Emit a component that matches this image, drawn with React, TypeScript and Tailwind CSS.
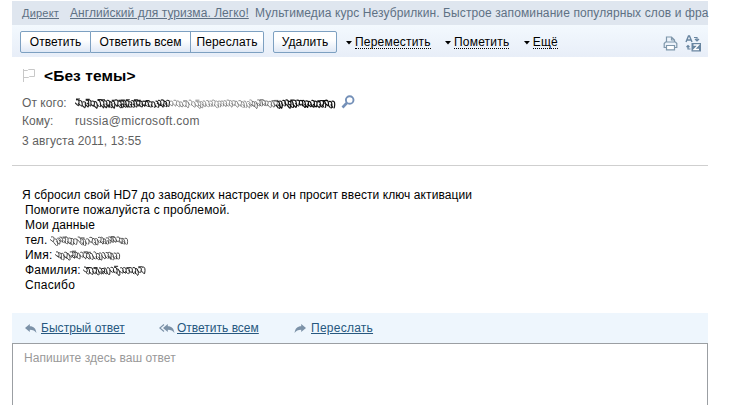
import type { ReactNode } from 'react';

type ScribbleProps = {
  width: number;
  seed: number;
  // parts drawn one after another: end of the part (0..1) and its colour
  parts: { end: number; color: string; weight: number }[];
};

// Hand scribble that hides private data
const Scribble = ({ width, seed, parts }: ScribbleProps) => {
  let s = seed;
  const rand = () => {
    s = (s * 16807) % 2147483647;
    return s / 2147483647;
  };

  let x = 1;
  const paths = parts.map((part) => {
    let d = '';
    while (x < width * part.end - 3) {
      // small slanted loops with short strokes between them
      const y = 2 + rand() * 2;
      const h = 4.5 + rand() * 2.5;
      d += `M${x.toFixed(1)} ${y.toFixed(1)}q${(2 + rand() * 2).toFixed(1)} -1 3 ${(h / 2).toFixed(1)}t-1 ${(h / 2).toFixed(1)}`;
      d += `M${(x - 1).toFixed(1)} ${(y + h / 2).toFixed(1)}l${(2 + rand() * 1.5).toFixed(1)} ${(h / 2).toFixed(1)}`;
      if (rand() > 0.8) d += `M${x.toFixed(1)} ${(y - 1).toFixed(1)}h4`;
      x += 2.3 + rand() * 1.4;
    }
    return { d, ...part };
  });

  return (
    <svg width={width} height={11} viewBox={`0 0 ${width} 11`} fill="none" className="shrink-0">
      {paths.map((p) => (
        <path key={p.end} d={p.d} stroke={p.color} strokeWidth={p.weight} />
      ))}
    </svg>
  );
};

const ReplyArrow = ({ className = '' }: { className?: string }) => (
  <svg width="12" height="10" viewBox="0 0 12 10" fill="#7c92a8" className={className}>
    <path d="M0 4 4.8 0v2.3C8.8 2.3 10.8 4.4 11.4 9 9.8 6.6 8 5.7 4.8 5.7V8z" />
  </svg>
);

const ReplyAllArrow = () => (
  <svg width="16" height="10" viewBox="0 0 16 10" fill="#7c92a8">
    <path d="M4 4 8.8 0v2.3c4 0 6 2.1 6.6 6.7C13.8 6.6 12 5.7 8.8 5.7V8z" />
    <path d="M5 .5.8 4 5 7.5" fill="none" stroke="#7c92a8" strokeWidth="1.2" />
  </svg>
);

const MenuLink = ({ className, children }: { className: string; children: ReactNode }) => (
  <a className={`flex items-center ${className}`}>
    <svg width="6" height="4" viewBox="0 0 6 4" className="mt-[3px] mr-[3px]">
      <path d="M0 0h6L3 3.5z" fill="#000" />
    </svg>
    <span className="h-[14px] border-b border-dotted border-black leading-[14px] tracking-[0.2px]">{children}</span>
  </a>
);

const buttonClass =
  'flex h-[22px] items-center justify-center border-[#7da0c1] bg-linear-to-b from-white from-40% to-[#dfe8f5]';

export default function App() {
  return (
    <div className="h-[405px] w-[732px] overflow-hidden bg-white pt-px pl-3 font-['Liberation_Sans',Arial,sans-serif] text-[12px] leading-[15px] text-black">
      <div className="flex h-[404px] w-[696px] flex-col">
        {/* Ad line */}
        <div className="flex h-6 shrink-0 items-center bg-[#dfe6ef] pt-px pl-[10px] whitespace-nowrap text-[#5e7184]">
          <a className="w-12 shrink-0 text-[11px] tracking-[0.2px] underline">Директ</a>
          <a className="w-[185px] shrink-0 tracking-[0.05px] underline">Английский для туризма. Легко!</a>
          <span className="tracking-[0.1px]">Мультимедиа курс Незубрилкин. Быстрое запоминание популярных слов и фра</span>
        </div>

        {/* Toolbar */}
        <div className="flex h-8 shrink-0 items-center bg-linear-to-b from-[#f3f9fe] to-[#e8eef8] pt-px pl-2 whitespace-nowrap">
          <button className={`${buttonClass} w-[71px] rounded-l-xs border pt-px`}>Ответить</button>
          <button className={`${buttonClass} w-[100px] border-y border-r pt-px`}>Ответить всем</button>
          <button className={`${buttonClass} w-[73px] rounded-r-xs border-y border-r pt-px tracking-[0.15px]`}>Переслать</button>
          <button className={`${buttonClass} ml-[9px] w-16 rounded-xs border pt-px tracking-[0.1px]`}>Удалить</button>
          <MenuLink className="ml-[9px] w-[99px]">Переместить</MenuLink>
          <MenuLink className="w-[79px]">Пометить</MenuLink>
          <MenuLink className="w-[34px]">Ещё</MenuLink>

          <svg width="15" height="15" viewBox="0 0 15 15" fill="none" stroke="#7f97ab" strokeWidth="1.2" className="mt-[3px] mr-[7px] ml-auto">
            <path d="M3.5 6V1h5l3 3v2M8.5 1v3h3" />
            <path d="M3.5 11.5H1.2v-4L2.5 6h10l1.3 1.5v4h-2.3" />
            <path d="M3.5 9.5h8v4.3h-8z" fill="#fff" />
          </svg>
          <svg width="17" height="17" viewBox="0 0 17 17" fill="none" stroke="#6885a0" className="mt-[3px] mr-[6px]">
            <path d="M1 7 3.5 1h1L7 7M2 5h4" strokeWidth="1.4" />
            <path d="M9 2.5h3V5M10 4l2 2 2-2M5.5 14H3v-3.5M1.500 12 3 10.500 4.500 12" strokeWidth="1.2" />
            <path d="M6.500 8h9.500v8.500H6.500z" fill="#6885a0" stroke="none" />
            <path d="M8.500 10h5l-4.500 4.500h5" stroke="#fff" strokeWidth="1.3" />
          </svg>
        </div>

        {/* Message header */}
        <div className="h-[109px] shrink-0 border-b border-[#cfcfcf] pl-[10px] text-[#5f5f5f]">
          <div className="flex items-center pt-[9px]">
            <svg width="14" height="15" viewBox="0 0 14 15" fill="none" stroke="#c8c8c8" className="mr-2">
              <path d="M1.5 1v13M1.5 2.500h4l1-1h6v7h-5l-1 1h-5" />
            </svg>
            <h1 className="text-[15.5px] leading-[19px] font-bold tracking-[0.1px] text-black">&lt;Без темы&gt;</h1>
          </div>
          <div className="mt-[11px] flex h-[15px] items-center">
            <span className="w-[53px] tracking-[0.05px]">От кого:</span>
            <Scribble
              width={262}
              seed={71}
              parts={[
                { end: 0.37, color: '#222', weight: 1.1 },
                { end: 0.68, color: '#777', weight: 0.8 },
                { end: 0.78, color: '#555', weight: 0.8 },
                { end: 1, color: '#111', weight: 1.2 },
              ]}
            />
            <svg width="14" height="14" viewBox="0 0 14 14" fill="none" stroke="#7490b8" className="-mt-[3px] ml-1">
              <circle cx="8.7" cy="5" r="3.8" strokeWidth="1.9" />
              <path d="M5.8 8 1.5 12.5" strokeWidth="2.6" />
            </svg>
          </div>
          <div className="mt-[3px] flex">
            <span className="w-[53px]">Кому:</span>
            <span className="tracking-[0.3px]">russia@microsoft.com</span>
          </div>
          <div className="mt-[5px] tracking-[0.1px]">3 августа 2011, 13:55</div>
        </div>

        {/* Message text */}
        <div className="h-[147px] shrink-0 pt-[22px] pl-[13px] tracking-[0.08px] whitespace-nowrap">
          <p className="-ml-[3px]">Я сбросил свой HD7 до заводских настроек и он просит ввести ключ активации</p>
          <p className="tracking-[0.16px]">Помогите пожалуйста с проблемой.</p>
          <p className="tracking-[0.1px]">Мои данные</p>
          <p className="flex items-center gap-[3px]">
            тел. <Scribble width={80} seed={913} parts={[{ end: 1, color: '#444', weight: 0.9 }]} />
          </p>
          <p className="flex items-center gap-0.5 tracking-[0.2px]">
            Имя: <Scribble width={66} seed={457} parts={[{ end: 1, color: '#333', weight: 0.9 }]} />
          </p>
          <p className="flex items-center gap-0.5 tracking-[0.2px]">
            Фамилия: <Scribble width={63} seed={229} parts={[{ end: 1, color: '#222', weight: 1 }]} />
          </p>
          <p className="tracking-[0.3px]">Спасибо</p>
        </div>

        {/* Quick actions */}
        <div className="flex h-[30px] shrink-0 items-center bg-[#eef6fd] pt-px pl-[13px] text-[#27587f]">
          <a className="flex w-[134px] items-center gap-1">
            <ReplyArrow />
            <span className="tracking-[0.05px] underline">Быстрый ответ</span>
          </a>
          <a className="flex w-[135px] items-center gap-[2px]">
            <ReplyAllArrow />
            <span className="underline">Ответить всем</span>
          </a>
          <a className="flex items-center gap-[5px]">
            <ReplyArrow className="-scale-x-100" />
            <span className="tracking-[0.25px] underline">Переслать</span>
          </a>
        </div>

        <textarea
          className="block w-full grow resize-none border border-b-0 border-[#9b9fa3] pt-[7px] pl-[11px] tracking-[0.05px] placeholder:text-[#999] placeholder:opacity-100"
          placeholder="Напишите здесь ваш ответ"
        />
      </div>
    </div>
  );
}
